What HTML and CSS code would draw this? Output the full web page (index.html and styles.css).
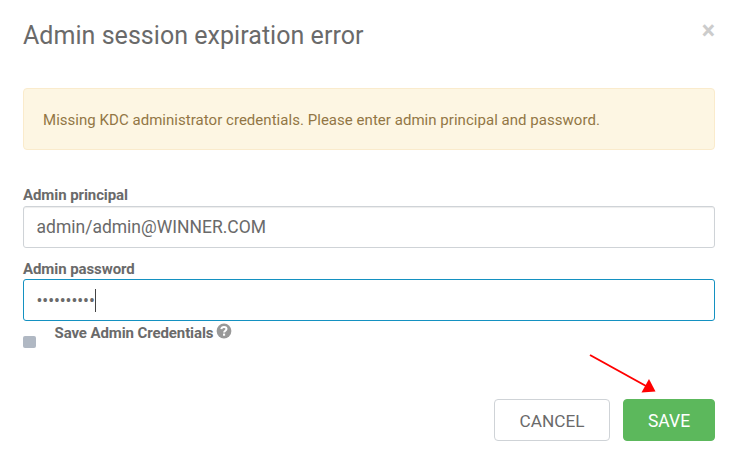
FILE: index.html
```html
<!DOCTYPE html>
<html lang="en">
<head>
    <meta charset="UTF-8">
    <meta name="viewport" content="width=device-width, initial-scale=1.0">
    <title>Admin session expiration error</title>
    <link rel="stylesheet" href="styles.css">
</head>
<body>
    <div class="modal">
        <div class="modal-header">
            <h4>Admin session expiration error</h4>
            <button type="button" class="close">&times;</button>
        </div>
        <div class="alert">Missing KDC administrator credentials. Please enter admin principal and password.</div>
        <form>
            <div class="form-group">
                <label for="principal">Admin principal</label>
                <input type="text" class="form-control" id="principal" value="admin/admin@WINNER.COM">
            </div>
            <div class="form-group">
                <label class="password-label" for="password">Admin password</label>
                <div class="form-control focused" id="password"><span class="dots">••••••••••</span><span class="caret"></span></div>
            </div>
            <div class="save-row">
                <span class="checkbox"></span>
                <label>Save Admin Credentials</label>
                <svg class="help" viewBox="0 0 16 16">
                    <circle cx="8" cy="8" r="7.4" fill="#999"/>
                    <path d="M5.3 6.1C5.8 3.2 10.5 3.4 10.5 6.1C10.5 7.8 8.1 7.7 8.1 9.6" fill="none" stroke="#fff" stroke-width="2"/>
                    <rect x="7" y="10.6" width="2.1" height="2.1" fill="#fff"/>
                </svg>
            </div>
            <div class="modal-footer">
                <button type="button" class="btn">CANCEL</button>
                <button type="button" class="btn btn-success">SAVE</button>
            </div>
        </form>
        <svg class="arrow" viewBox="0 0 72 45">
            <path d="M5 5L61 36" stroke="#f00" stroke-width="2"/>
            <path d="M70.5 41.5L56.5 42.5L64 29Z" fill="#f00"/>
        </svg>
    </div>
</body>
</html>
```
FILE: styles.css
```css
* {
    box-sizing: border-box;
}
body {
    margin: 0;
    font-family: Roboto, sans-serif;
    color: #6a6a6a;
    background: #fff;
}
.modal {
    position: relative;
    height: 460px;
    padding: 20px 20px 0 23px;
}
.modal-header {
    display: flex;
    justify-content: space-between;
    height: 68px;
}
h4 {
    margin: 0;
    font-size: 25px;
    font-weight: 400;
    line-height: 31px;
    letter-spacing: 0.04px;
}
.close {
    height: 20px;
    margin-top: 1px;
    padding: 0;
    border: none;
    background: none;
    color: #ccc;
    font: bold 25px/20px Roboto, sans-serif;
}
.alert {
    height: 62px;
    margin-bottom: 35px;
    padding: 0 19px;
    border: 1px solid #faebcc;
    border-radius: 4px;
    background: #fdf6e3;
    color: #927645;
    font-size: 15px;
    line-height: 62px;
    letter-spacing: 0.035px;
}
.form-group {
    height: 73px;
}
label {
    display: block;
    height: 21px;
    font-size: 15px;
    font-weight: 700;
    line-height: 20px;
    letter-spacing: -0.08px;
}
.password-label {
    line-height: 22px;
}
.form-control {
    display: flex;
    align-items: center;
    width: 100%;
    height: 42px;
    padding: 0 12.5px;
    border: 1px solid #cfd3d7;
    border-radius: 3px;
    box-shadow: inset 0 1px 1px rgba(0, 0, 0, 0.075);
    color: #6a6a6a;
    font: 17.5px Roboto, sans-serif;
}
.focused {
    border-color: #1491c1;
    box-shadow: none;
}
.dots {
    padding-top: 2px;
    letter-spacing: -0.08px;
}
.caret {
    width: 1px;
    height: 23px;
    margin-top: 1px;
    background: #444;
}
.save-row {
    display: flex;
    height: 68px;
    padding-top: 1px;
}
.save-row label {
    margin-top: -9px;
    letter-spacing: -0.1px;
}
.checkbox {
    width: 13px;
    height: 12px;
    margin: 4px 18.5px 0 0;
    background: #b0b8c3;
    border-radius: 2px;
}
.help {
    width: 16px;
    height: 16px;
    margin: -9px 0 0 3px;
}
.modal-footer {
    display: flex;
    justify-content: flex-end;
    gap: 13px;
}
.btn {
    width: 116px;
    height: 42px;
    padding-top: 3px;
    border: 1px solid #cfd3d7;
    border-radius: 4px;
    background: #fff;
    color: #6a6a6a;
    font: 17.2px Roboto, sans-serif;
}
.btn-success {
    width: 92px;
    padding-top: 2px;
    border-color: #5cb85c;
    background: #5cb85c;
    color: #fff;
    font-size: 17.5px;
}
.arrow {
    position: absolute;
    left: 585px;
    top: 350px;
    width: 72px;
    height: 45px;
}
```
